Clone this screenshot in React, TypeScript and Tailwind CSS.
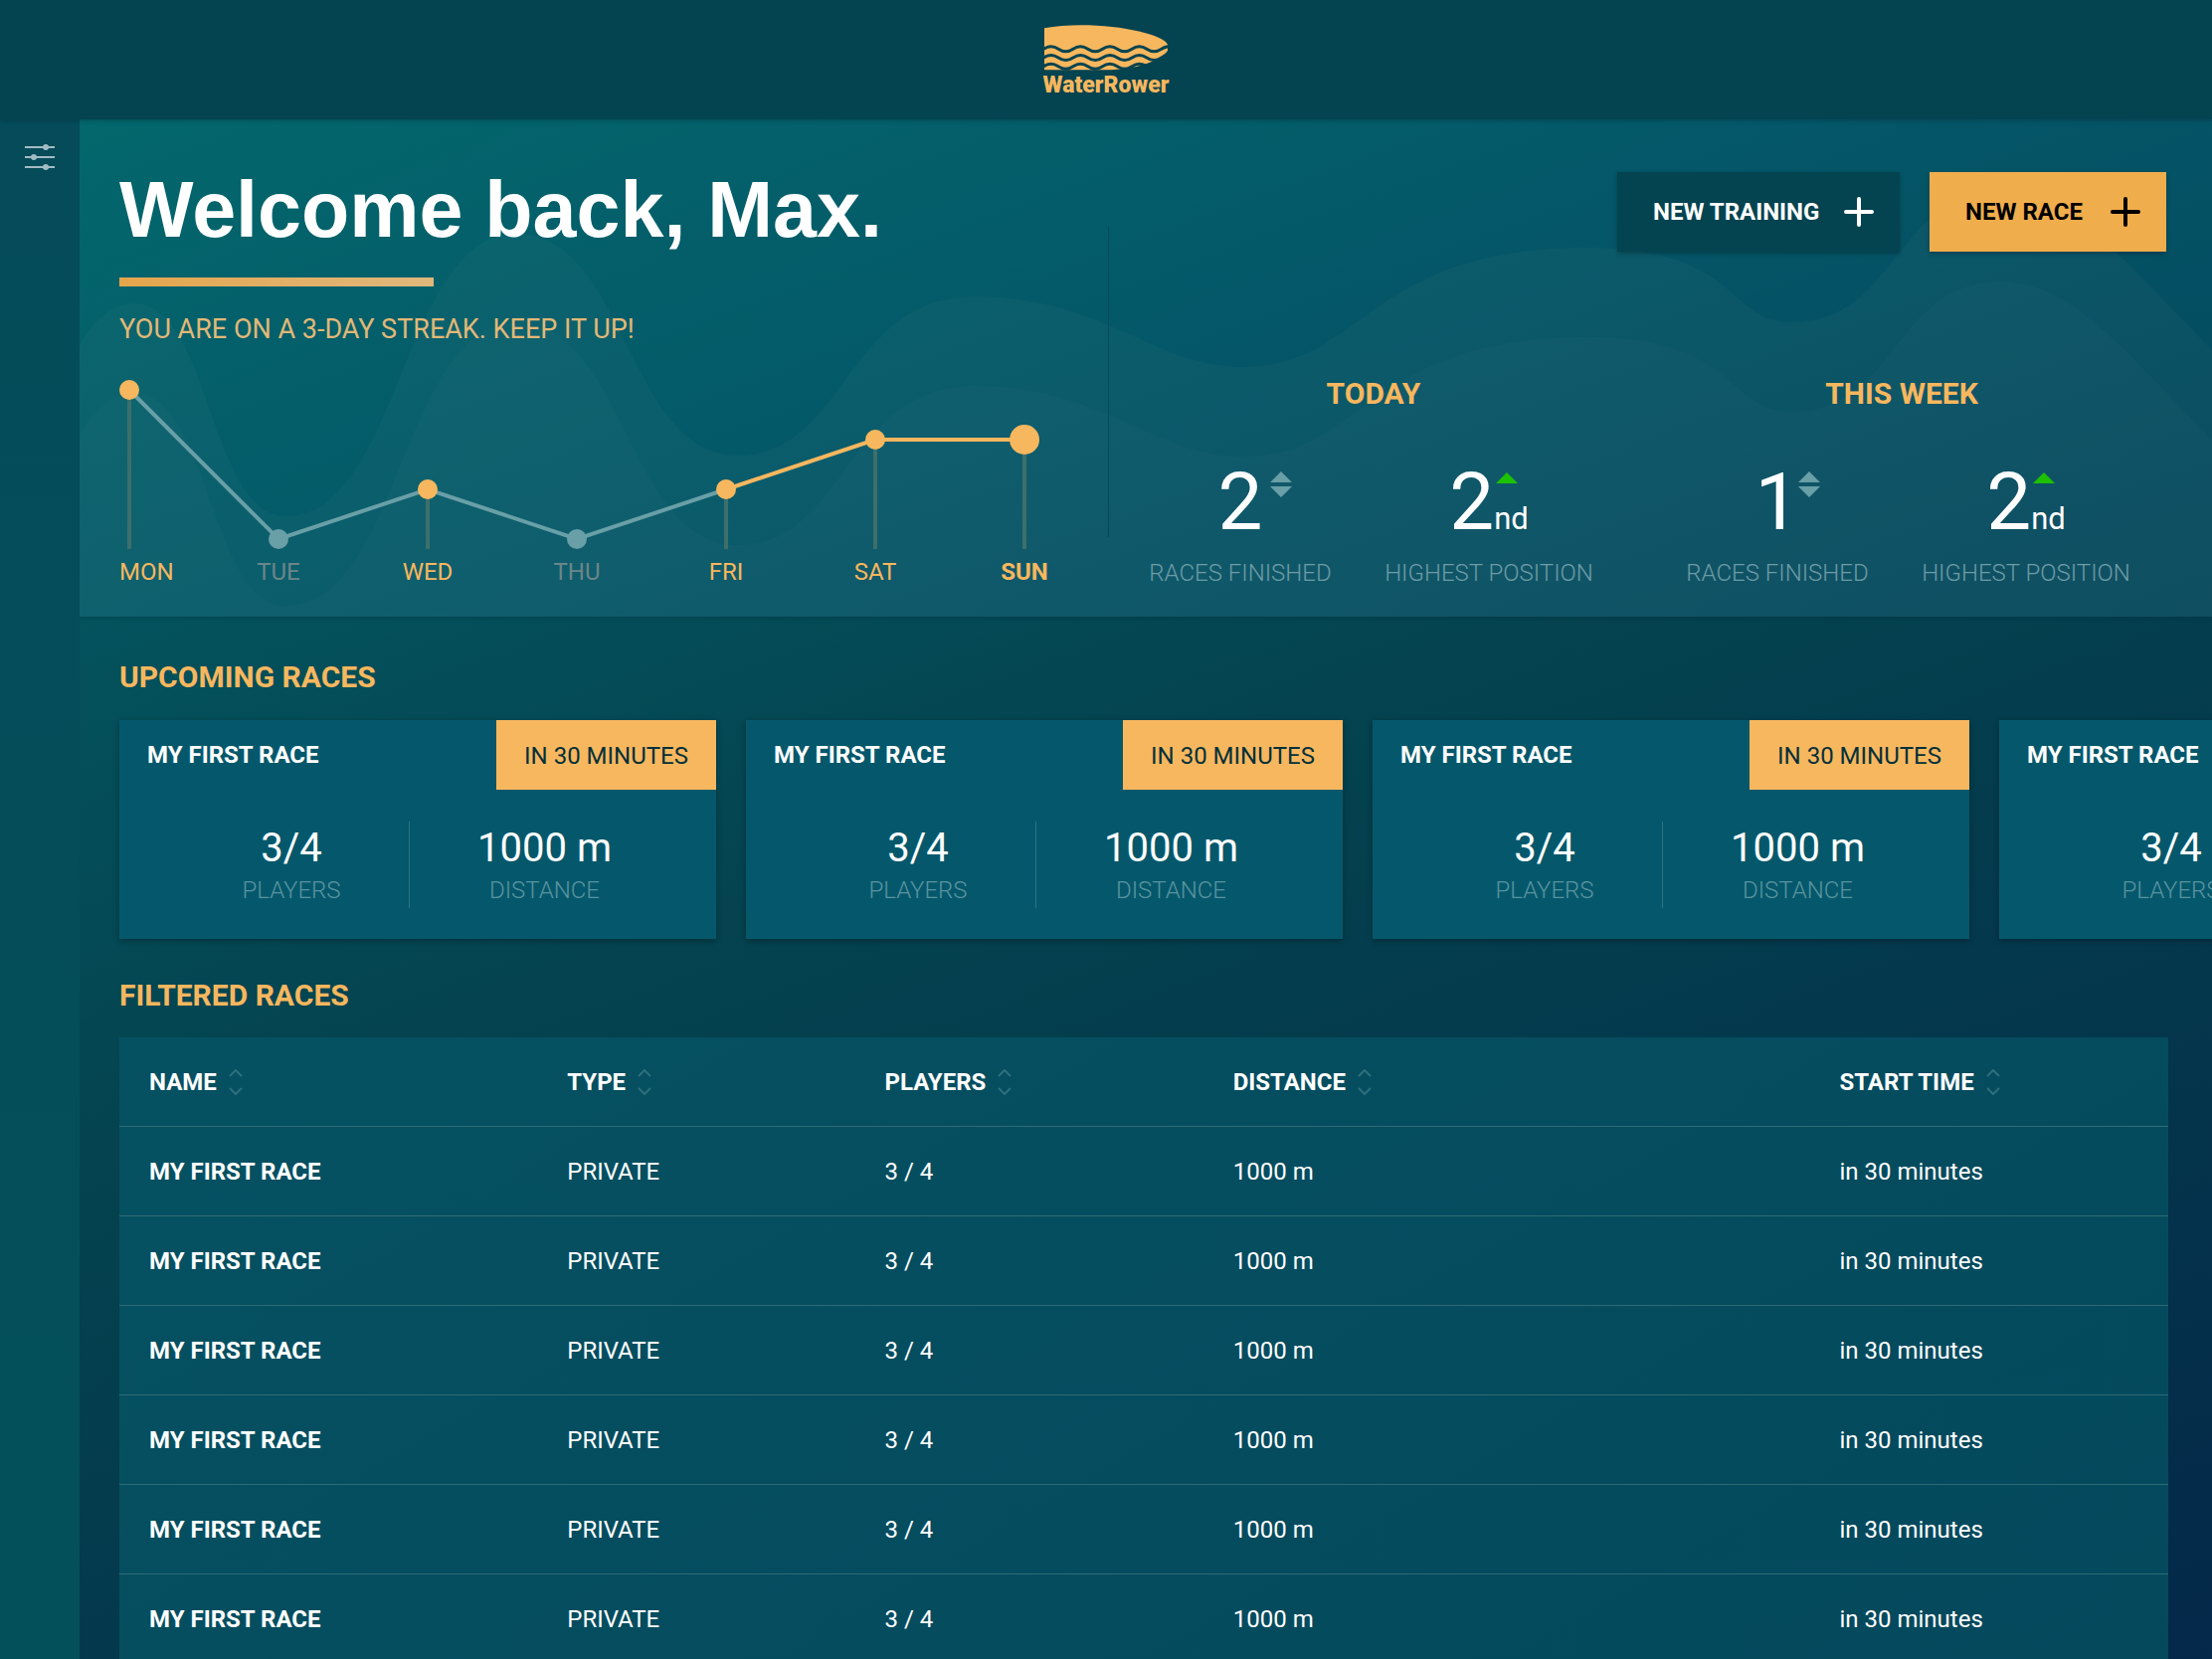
import React from "react";

const days = [
  { label: "MON", x: 50, y: 32, active: true },
  { label: "TUE", x: 200, y: 182, active: false },
  { label: "WED", x: 350, y: 132, active: true },
  { label: "THU", x: 500, y: 182, active: false },
  { label: "FRI", x: 650, y: 132, active: true },
  { label: "SAT", x: 800, y: 82, active: true },
  { label: "SUN", x: 950, y: 82, active: true },
];

const columns = [
  { name: "NAME", width: "w-[20.4%]" },
  { name: "TYPE", width: "w-[15.5%]" },
  { name: "PLAYERS", width: "w-[17%]" },
  { name: "DISTANCE", width: "w-[29.6%]" },
  { name: "START TIME", width: "w-[17.5%]" },
];

const races = Array.from({ length: 7 }, (_, id) => ({
  id,
  name: "MY FIRST RACE",
  type: "PRIVATE",
  players: "3 / 4",
  distance: "1000 m",
  start: "in 30 minutes",
}));

function Logo() {
  const ripple = "q22.2 -15 44.4 0 t44.4 0 t44.4 0 t44.4 0 t44.4 0 t44.4 0 t44.4 0 t44.4 0 t44.4 0";
  return (
    <a href="#home" aria-label="WaterRower" className="flex flex-col items-center text-[#f7b75e]">
      <svg viewBox="0 0 372 144" className="h-12 w-[124px]" aria-hidden="true">
        <path
          fill="currentColor"
          d="M0 13 Q50 4 110 4 C240 4 360 34 372 63 L372 80 C362 96 336 110 308 120 C268 134 226 138 190 139 L0 139 Z"
        />
        <g fill="none" stroke="#044350" strokeWidth="9">
          <path d={`M-2 76 ${ripple}`} />
          <path d={`M-2 102 ${ripple}`} />
          <path d={`M-2 128 ${ripple}`} />
        </g>
      </svg>
      <span className="font-[Roboto,sans-serif] text-[23px] leading-7 font-black">WaterRower</span>
    </a>
  );
}

function Plus() {
  return (
    <svg viewBox="0 0 30 30" className="size-[30px]" fill="none" stroke="currentColor" strokeWidth="4" strokeLinecap="round" aria-hidden="true">
      <path d="M15 2V28M2 15H28" />
    </svg>
  );
}

function Waves() {
  return (
    <svg
      viewBox="80 120 2144 500"
      preserveAspectRatio="none"
      className="pointer-events-none absolute inset-0 h-full w-full"
      aria-hidden="true"
    >
      <defs>
        <path
          id="wave"
          d="M80 347 C95 320 115 305 135 305 C211 305 211 519 287 519 C403 519 403 235 519 235 C630 235 630 458 742 458 C850 458 850 298 980 298 C1110 298 1160 369 1250 369 C1370 369 1375 249 1595 249 C1750 249 1735 324 1802 324 C1906 324 1906 193 2010 193 C2080 193 2130 255 2224 352 V720 H80 Z"
        />
      </defs>
      <use href="#wave" fill="#8fa0a4" fillOpacity="0.055" />
      <use href="#wave" y="90" fill="#8fa0a4" fillOpacity="0.035" />
    </svg>
  );
}

function StreakChart() {
  return (
    <div className="w-[1000px]">
      <svg viewBox="0 0 1000 200" className="block h-[200px] w-full" aria-hidden="true">
        <g fill="#3d6f6b">
          {days
            .filter((d) => d.active)
            .map((d) => (
              <rect key={d.label} x={d.x - 2} y={d.y} width="4" height={192 - d.y} />
            ))}
        </g>
        <polyline points="50,32 200,182 350,132 500,182 650,132" fill="none" stroke="#699fa7" strokeWidth="4" />
        <polyline points="650,132 800,82 950,82" fill="none" stroke="#f7b75e" strokeWidth="4" />
        {days.map((d) => (
          <circle key={d.label} cx={d.x} cy={d.y} r={d.label === "SUN" ? 15 : 10} fill={d.active ? "#f7b75e" : "#699fa7"} />
        ))}
      </svg>
    </div>
  );
}

function DayLabels() {
  return (
    <ol className="flex pl-10 text-2xl leading-[30px]">
      <li className="w-[85px] text-[#f7b75e]">MON</li>
      {days.slice(1).map((d) => (
        <li
          key={d.label}
          className={
            d.label === "SUN"
              ? "w-[150px] text-center font-bold text-[#f7b75e]"
              : d.active
                ? "w-[150px] text-center text-[#f7b75e]"
                : "w-[150px] text-center text-[#6b868a]"
          }
        >
          {d.label}
        </li>
      ))}
    </ol>
  );
}

type StatProps = { value: string; suffix?: string; label: string; trend: "up" | "flat"; gap: string };

function Stat({ value, suffix, label, trend, gap }: StatProps) {
  return (
    <div className="flex w-[250px] flex-col items-center">
      <p className="flex h-[94px] items-baseline text-[80px] leading-[94px] text-white">
        <span className="relative">
          {value}
          <svg viewBox="0 0 22 26" className={`absolute top-4 left-full h-[26px] w-[22px] ${gap}`} aria-hidden="true">
            {trend === "up" ? (
              <path d="M0 12 L11 1 L22 12 Z" fill="#1dc100" />
            ) : (
              <path d="M0 11 L11 0 L22 11 Z M0 15 H22 L11 26 Z" fill="#699fa7" />
            )}
          </svg>
        </span>
        {suffix && <span className="text-[31px] leading-none">{suffix}</span>}
      </p>
      <p className="mt-2.5 text-2xl leading-7 font-light text-[#6d9ba6]">{label}</p>
    </div>
  );
}

function RaceCard() {
  return (
    <li className="h-[220px] w-[600px] shrink-0 bg-[#05586b] shadow-[0_2px_6px_rgba(0,0,0,0.3)]">
      <div className="flex items-start justify-between">
        <h3 className="pt-[21px] pl-7 text-2xl leading-7 font-bold text-white">MY FIRST RACE</h3>
        <span className="flex h-[70px] w-[221px] items-center justify-center bg-[#f7b75e] pt-0.5 text-2xl text-[#04303a]">IN 30 MINUTES</span>
      </div>
      <dl className="mt-8 flex h-[87px] pr-[37px] pl-[55px]">
        <div className="flex w-[237px] flex-col-reverse items-center justify-center border-r border-[#2f7380] pt-[3px]">
          <dt className="text-2xl leading-9 font-light text-[#5a93a0]">PLAYERS</dt>
          <dd className="text-[40px] leading-[48px] text-white">3/4</dd>
        </div>
        <div className="flex flex-1 flex-col-reverse items-center justify-center pt-[3px]">
          <dt className="text-2xl leading-9 font-light text-[#5a93a0]">DISTANCE</dt>
          <dd className="text-[40px] leading-[48px] text-white">1000 m</dd>
        </div>
      </dl>
    </li>
  );
}

function SortIcon() {
  return (
    <svg viewBox="0 0 14 26" className="h-[26px] w-3.5" fill="none" stroke="#2f6f7c" strokeWidth="2" aria-hidden="true">
      <path d="M1 7 L7 1 L13 7 M1 19 L7 25 L13 19" />
    </svg>
  );
}

export default function App() {
  return (
    <div className="flex h-screen flex-col overflow-hidden bg-[#043a4c] font-[Roboto,sans-serif]">
      <header className="relative z-10 flex h-[120px] shrink-0 justify-center bg-[#044350] pt-6 shadow-[0_1px_4px_rgba(0,40,50,0.4)]">
        <Logo />
      </header>
      <div className="flex min-h-0 flex-1">
        <aside className="w-20 shrink-0 bg-linear-to-b from-[#054b59] to-[#03505a]">
          <button type="button" aria-label="Filters" className="mt-5 flex h-9 w-20 items-center justify-center text-[#a2bcc4]">
            <svg viewBox="0 0 30 26" className="h-[26px] w-[30px]" fill="currentColor" aria-hidden="true">
              <path d="M0 2h30v2H0zM0 12h30v2H0zM0 22h30v2H0z" />
              <circle cx="21" cy="3" r="3" />
              <circle cx="9" cy="13" r="3" />
              <circle cx="21" cy="23" r="3" />
            </svg>
          </button>
        </aside>
        <main className="min-w-0 flex-1 overflow-hidden bg-linear-[160deg] from-[#03616a] via-[#04434f] via-45% to-[#042849]">
          <section className="relative flex h-[500px] justify-between bg-linear-[160deg] from-[#03676c] via-[#045768] to-[#04465c] shadow-[0_0_4px_rgba(0,40,50,0.5)]">
            <Waves />
            <div className="relative flex flex-col">
              <h1 className="pt-[46px] pl-10 font-['Liberation_Sans',sans-serif] text-[79px] leading-[90px] font-bold text-white">
                Welcome back, Max.
              </h1>
              <div className="mt-[23px] ml-10 h-[9px] w-[316px] bg-linear-to-r from-[#e4a54b] to-[#dfb87c]" />
              <p className="mt-7 pl-10 text-[27px] leading-[30px] text-[#e2b877]">YOU ARE ON A 3-DAY STREAK. KEEP IT UP!</p>
              <div className="mt-[14px]">
                <StreakChart />
                <DayLabels />
              </div>
            </div>
            <div className="relative flex flex-col items-end">
              <div className="mt-[53px] mr-[46px] flex gap-[30px] text-2xl font-bold">
                <button type="button" className="flex h-20 w-[284px] items-center justify-between bg-[#044350] pr-[26px] pl-9 text-white shadow-[0_2px_4px_rgba(0,0,0,0.25)]">
                  NEW TRAINING
                  <Plus />
                </button>
                <button type="button" className="flex h-20 w-[238px] items-center justify-between bg-[#f0ad4c] pr-[26px] pl-9 text-black shadow-[0_2px_4px_rgba(0,0,0,0.25)]">
                  NEW RACE
                  <Plus />
                </button>
              </div>
              <div className="mr-[62px] flex pt-[127px]">
                <div className="mr-[22px] w-[518px]">
                  <h2 className="text-center text-[30px] leading-8 font-bold text-[#f7b75e]">TODAY</h2>
                  <div className="flex pt-[46px]">
                    <Stat value="2" label="RACES FINISHED" trend="flat" gap="ml-2" />
                    <Stat value="2" suffix="nd" label="HIGHEST POSITION" trend="up" gap="ml-0.5" />
                  </div>
                </div>
                <div className="w-[500px]">
                  <h2 className="text-center text-[30px] leading-8 font-bold text-[#f7b75e]">THIS WEEK</h2>
                  <div className="flex pt-[46px]">
                    <Stat value="1" label="RACES FINISHED" trend="flat" gap="-ml-px" />
                    <Stat value="2" suffix="nd" label="HIGHEST POSITION" trend="up" gap="ml-0.5" />
                  </div>
                </div>
              </div>
              <div className="absolute top-[108px] -left-2 h-[312px] w-px bg-[#04485a]" />
            </div>
          </section>

          <section className="pt-[45px] pl-10">
            <h2 className="text-[30px] leading-8 font-bold text-[#f7b75e]">UPCOMING RACES</h2>
            <ul className="mt-[27px] flex gap-[30px]">
              <RaceCard />
              <RaceCard />
              <RaceCard />
              <RaceCard />
            </ul>
          </section>

          <section className="pt-[41px] pr-11 pl-10">
            <h2 className="text-[30px] leading-8 font-bold text-[#f7b75e]">FILTERED RACES</h2>
            <table className="mt-[26px] w-full table-fixed border-separate border-spacing-0 bg-linear-[150deg] from-[#055162] to-[#04485c] text-left text-2xl text-white">
              <thead>
                <tr>
                  {columns.map((c) => (
                    <th key={c.name} scope="col" className={`h-[90px] border-b border-[#2f6c74] pl-[30px] font-bold ${c.width}`}>
                      <button type="button" className="flex items-center gap-3">
                        {c.name}
                        <SortIcon />
                      </button>
                    </th>
                  ))}
                </tr>
              </thead>
              <tbody>
                {races.map((r) => (
                  <tr key={r.id}>
                    <th scope="row" className="h-[90px] border-b border-[#2f6c74] pl-[30px] font-bold">{r.name}</th>
                    <td className="border-b border-[#2f6c74] pl-[30px]">{r.type}</td>
                    <td className="border-b border-[#2f6c74] pl-[30px]">{r.players}</td>
                    <td className="border-b border-[#2f6c74] pl-[30px]">{r.distance}</td>
                    <td className="border-b border-[#2f6c74] pl-[30px]">{r.start}</td>
                  </tr>
                ))}
              </tbody>
            </table>
          </section>
        </main>
      </div>
    </div>
  );
}
